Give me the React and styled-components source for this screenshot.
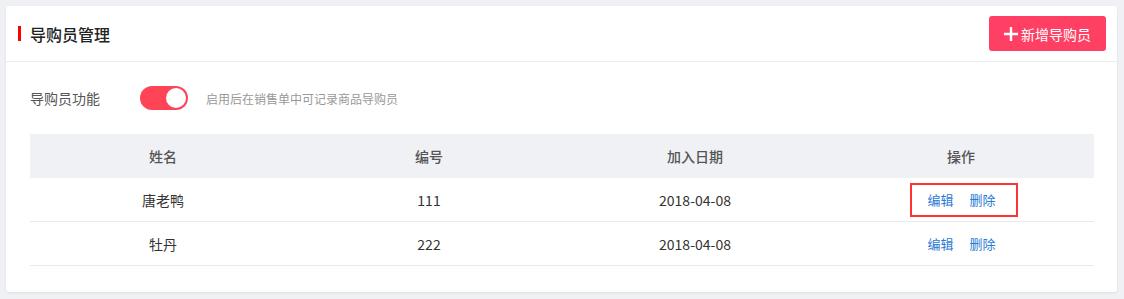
import React, { useState } from "react";
import styled, { createGlobalStyle } from "styled-components";

const GlobalStyle = createGlobalStyle`
  html, body {
    margin: 0;
    padding: 0;
    background: #f0f1f5;
    font-family: "Noto Sans CJK SC", "Noto Sans", sans-serif;
  }
`;

const Page = styled.div`
  padding: 6px 7px 8px 6px;
`;

const Card = styled.div`
  background: #fff;
  border-radius: 3px;
  box-shadow: 0 1px 3px rgba(0, 0, 0, 0.08);
  padding-bottom: 26px;
`;

const Header = styled.div`
  height: 55px;
  display: flex;
  align-items: center;
  justify-content: space-between;
  padding: 0 11px 0 12px;
  border-bottom: 1px solid #ebecf0;
`;

const Title = styled.h2`
  margin: 0;
  display: flex;
  align-items: center;
  font-size: 16px;
  font-weight: 500;
  color: #222;
  &::before {
    content: "";
    width: 3px;
    height: 15px;
    background: #ff0000;
    margin-right: 9px;
  }
`;

const AddButton = styled.button`
  height: 35px;
  width: 117px;
  border: none;
  border-radius: 3px;
  background: #ff4064;
  color: #fff;
  font-family: inherit;
  font-size: 14px;
  display: flex;
  align-items: center;
  justify-content: center;
  gap: 3px;
  cursor: pointer;
  svg {
    margin-top: 1px;
  }
`;

const Body = styled.div`
  padding: 0 23px 0 24px;
`;

const SettingRow = styled.div`
  display: flex;
  align-items: center;
  height: 72px;
`;

const Label = styled.span`
  font-size: 14px;
  color: #555;
  width: 110px;
`;

const Switch = styled.button`
  width: 48px;
  height: 24px;
  border-radius: 12px;
  border: none;
  padding: 0;
  background: ${(p) => (p.on ? "#ff4458" : "#ccc")};
  position: relative;
  cursor: pointer;
  &::after {
    content: "";
    position: absolute;
    top: 2px;
    left: ${(p) => (p.on ? "26px" : "2px")};
    width: 20px;
    height: 20px;
    border-radius: 50%;
    background: #fff;
  }
`;

const Hint = styled.span`
  font-size: 12px;
  color: #999;
  margin-left: 18px;
`;

const Table = styled.table`
  width: 100%;
  border-collapse: collapse;
  table-layout: fixed;
  font-size: 14px;
`;

const Th = styled.th`
  height: 44px;
  background: #f0f1f5;
  color: #555;
  font-weight: 500;
  text-align: center;
  padding: 0;
`;

const Td = styled.td`
  height: 43px;
  text-align: center;
  color: #333;
  border-bottom: 1px solid #e8e9ef;
  padding: 0;
`;

const Actions = styled.div`
  display: inline-flex;
  gap: 16px;
  padding: 5px 20px 6px 15px;
  border: 2px solid ${(p) => (p.marked ? "#ff3333" : "transparent")};
  margin-left: 6px;
`;

const Link = styled.a`
  color: #2b7ad6;
  font-size: 13px;
  cursor: pointer;
`;

const rows = [
  { name: "唐老鸭", code: "111", date: "2018-04-08", marked: true },
  { name: "牡丹", code: "222", date: "2018-04-08" },
];

export default function App() {
  const [on, setOn] = useState(true);
  return (
    <Page>
      <GlobalStyle />
      <Card>
        <Header>
          <Title>导购员管理</Title>
          <AddButton>
            <svg width="14" height="14" viewBox="0 0 14 14">
              <path d="M7 0v14M0 7h14" stroke="#fff" strokeWidth="2.4" />
            </svg>
            新增导购员
          </AddButton>
        </Header>
        <Body>
          <SettingRow>
            <Label>导购员功能</Label>
            <Switch on={on} onClick={() => setOn(!on)} />
            <Hint>启用后在销售单中可记录商品导购员</Hint>
          </SettingRow>
          <Table>
            <thead>
              <tr>
                <Th>姓名</Th>
                <Th>编号</Th>
                <Th>加入日期</Th>
                <Th>操作</Th>
              </tr>
            </thead>
            <tbody>
              {rows.map((r) => (
                <tr key={r.code}>
                  <Td>{r.name}</Td>
                  <Td>{r.code}</Td>
                  <Td>{r.date}</Td>
                  <Td>
                    <Actions marked={r.marked}>
                      <Link>编辑</Link>
                      <Link>删除</Link>
                    </Actions>
                  </Td>
                </tr>
              ))}
            </tbody>
          </Table>
        </Body>
      </Card>
    </Page>
  );
}
